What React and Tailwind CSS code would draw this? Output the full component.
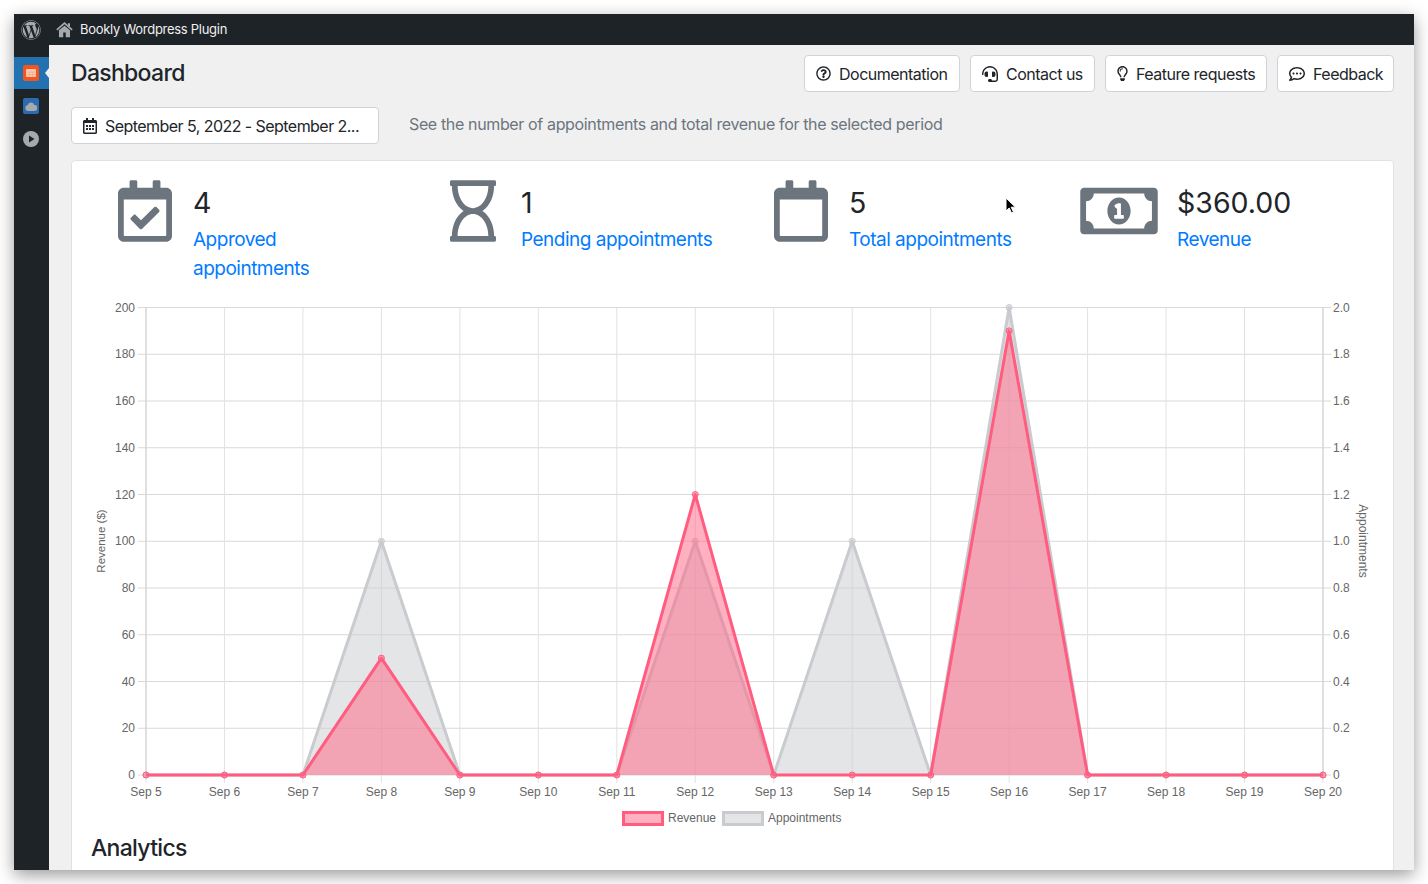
import React from 'react';
import { FaWordpress, FaRegCalendarCheck, FaRegCalendar, FaRegHourglass, FaRegMoneyBillAlt, FaRegQuestionCircle, FaHeadset, FaRegLightbulb, FaRegCommentDots, FaRegCalendarAlt } from 'react-icons/fa';

const days = ['Sep 5', 'Sep 6', 'Sep 7', 'Sep 8', 'Sep 9', 'Sep 10', 'Sep 11', 'Sep 12', 'Sep 13', 'Sep 14', 'Sep 15', 'Sep 16', 'Sep 17', 'Sep 18', 'Sep 19', 'Sep 20'];
const revenue = [0, 0, 0, 50, 0, 0, 0, 120, 0, 0, 0, 190, 0, 0, 0, 0];
const appointments = [0, 0, 0, 100, 0, 0, 0, 100, 0, 100, 0, 200, 0, 0, 0, 0];

const LEFT = 146;
const RIGHT = 1323;
const TOP = 307.5;
const BOTTOM = 775;
const xAt = (i) => LEFT + (i * (RIGHT - LEFT)) / 15;
const yAt = (v) => BOTTOM - (v * (BOTTOM - TOP)) / 200;

function Series({ data, stroke, fill }) {
  const line = data.map((v, i) => `${xAt(i)},${yAt(v)}`).join(' ');
  const area = `${LEFT},${BOTTOM} ${line} ${RIGHT},${BOTTOM}`;
  return (
    <g>
      <polygon points={area} fill={fill} />
      <polyline points={line} fill="none" stroke={stroke} strokeWidth="3" strokeLinejoin="round" />
      {data.map((v, i) => (
        <circle key={i} cx={xAt(i)} cy={yAt(v)} r="3" fill={fill} stroke={stroke} strokeWidth="1" />
      ))}
    </g>
  );
}

function Chart() {
  const ticks = [0, 20, 40, 60, 80, 100, 120, 140, 160, 180, 200];
  return (
    <svg width="1321" height="540" viewBox="72 290 1321 540" className="block" fontFamily="'Liberation Sans', sans-serif" fontSize="12" fill="#666">
      {ticks.map((t) => (
        <g key={t}>
          <line x1={LEFT - 8} x2={RIGHT + 8} y1={yAt(t)} y2={yAt(t)} stroke="#d9d9d9" />
          <text x={LEFT - 11} y={yAt(t) + 4} textAnchor="end">{t}</text>
          <text x={RIGHT + 10} y={yAt(t) + 4}>{t === 0 ? '0' : (t / 100).toFixed(1)}</text>
        </g>
      ))}
      {days.map((d, i) => (
        <g key={d}>
          <line x1={xAt(i)} x2={xAt(i)} y1={TOP} y2={BOTTOM + 8} stroke="#e2e2e2" />
          <text x={xAt(i)} y={796} textAnchor="middle">{d}</text>
        </g>
      ))}
      <line x1={LEFT} x2={LEFT} y1={TOP} y2={BOTTOM} stroke="#cfcfcf" />
      <line x1={RIGHT} x2={RIGHT} y1={TOP} y2={BOTTOM} stroke="#cfcfcf" />
      <text transform="translate(105 541) rotate(-90)" textAnchor="middle" fontSize="11.500">Revenue ($)</text>
      <text transform="translate(1359 541) rotate(90)" textAnchor="middle">Appointments</text>
      <Series data={appointments} stroke="#c9cbcf" fill="rgba(201,203,207,0.5)" />
      <Series data={revenue} stroke="#ff5c80" fill="rgba(255,99,132,0.5)" />
      <rect x="623.5" y="812.5" width="39" height="12" fill="#ffb1c1" stroke="#ff5c80" strokeWidth="3" />
      <text x="668" y="822">Revenue</text>
      <rect x="723.5" y="812.5" width="39" height="12" fill="#e4e5e7" stroke="#c9cbcf" strokeWidth="3" />
      <text x="768" y="822">Appointments</text>
    </svg>
  );
}

function HeadButton({ icon, label, width }) {
  return (
    <button className={`${width} h-[37px] flex items-center gap-2 pl-[11px] bg-white border border-[#ced4da] rounded text-[16px] tracking-[-0.5px] whitespace-nowrap text-[#212529]`}>
      {icon}
      {label}
    </button>
  );
}

function Stat({ icon, pad, value, label }) {
  return (
    <div className="flex">
      <div className={`w-[121px] shrink-0 -mt-[3px] flex justify-end items-start ${pad}`}>{icon}</div>
      <div>
        <div className="text-[28.500px] leading-[40px] text-[#212529]">{value}</div>
        <div className="text-[19px] leading-[29px] tracking-[-0.5px] text-[#007bff] mt-[2px] w-[195px]">{label}</div>
      </div>
    </div>
  );
}

export default function App() {
  return (
    <div className="w-[1428px] h-[884px] p-[14px] bg-white overflow-hidden [font-family:Inter,sans-serif]">
      <div className="relative w-[1400px] h-[856px] flex flex-col overflow-hidden shadow-[0_5px_16px_rgba(0,0,0,0.4)]">
        <header className="h-[31px] shrink-0 bg-[#1d2327] flex items-center text-[#f0f0f1] text-[13px] tracking-[-0.28px]">
          <div className="w-[33px] flex justify-center text-[#a7aaad]">
            <FaWordpress size={20} />
          </div>
          <svg width="17" height="17" viewBox="0 0 20 20" className="ml-[9px] mr-[6px]">
            <path d="M1 10.500 10 2.500l9 8" fill="none" stroke="#a7aaad" strokeWidth="2" />
            <path d="M14 2.500h2.500v4.500L14 5z" fill="#a7aaad" />
            <path d="M10 5.500 3.500 11v8h5v-5.500h3V19h5v-8z" fill="#a7aaad" />
          </svg>
          <span className="ml-px">Bookly Wordpress Plugin</span>
        </header>
        <div className="flex-1 flex min-h-0">
          <aside className="w-[35px] shrink-0 bg-[#1d2327] pt-[12px]">
            <div className="relative h-[32px] pr-[2px] bg-[#2271b1] flex items-center justify-center">
              <svg width="16" height="16" viewBox="0 0 16 16">
                <rect width="16" height="16" rx="2" fill="#f0561d" />
                <rect x="3" y="4" width="10" height="8" rx="1" fill="#ffc9b0" />
                <path d="M3 7h10M3 9.500h10M6.300 7v5M9.700 7v5" stroke="#f79a78" strokeWidth="0.500" />
              </svg>
              <div className="absolute right-0 top-[11px] w-0 h-0 border-y-[5px] border-y-transparent border-r-[4px] border-r-[#f0f0f1]" />
            </div>
            <div className="h-[34px] pr-[2px] flex items-center justify-center">
              <div className="w-[16px] h-[16px] rounded-[2px] bg-[#2b6cb0] flex items-center justify-center">
                <svg width="12" height="9" viewBox="0 0 12 9" fill="#a7aaad">
                  <path d="M3 9a3 3 0 0 1-.4-5.900A3.500 3.500 0 0 1 9.300 3 3 3 0 0 1 9.500 9z" />
                </svg>
              </div>
            </div>
            <div className="h-[32px] pr-[2px] flex items-center justify-center">
              <svg width="16" height="16" viewBox="0 0 16 16">
                <circle cx="8" cy="8" r="8" fill="#a7aaad" />
                <path d="M6 4.500 11.500 8 6 11.500z" fill="#1d2327" />
              </svg>
            </div>
          </aside>
          <main className="flex-1 min-w-0 bg-[#f0f0f1] pl-[22px] pr-[20px] pt-[10px] overflow-hidden">
            <div className="flex items-center justify-between">
              <h1 className="text-[23px] tracking-[-0.7px] font-medium text-[#212529]">Dashboard</h1>
              <div className="flex gap-[10px]">
                <HeadButton width="w-[156px]" label="Documentation" icon={<FaRegQuestionCircle size={15} />} />
                <HeadButton width="w-[125px]" label="Contact us" icon={<FaHeadset size={16} />} />
                <HeadButton width="w-[162px]" label="Feature requests" icon={<FaRegLightbulb className="w-[11px] h-[15px]" />} />
                <HeadButton width="w-[117px]" label="Feedback" icon={<FaRegCommentDots size={16} />} />
              </div>
            </div>
            <div className="flex items-center mt-[15px]">
              <div className="w-[308px] h-[37px] flex items-center gap-[8px] pl-[11px] bg-white border border-[#ced4da] rounded text-[16px] tracking-[-0.55px] text-[#212529]">
                <FaRegCalendarAlt className="w-[14px] h-[16px]" />
                <span>September 5, 2022 - September 2...</span>
              </div>
              <p className="ml-[30px] text-[16px] tracking-[-0.36px] text-[#6c757d] -mt-1">See the number of appointments and total revenue for the selected period</p>
            </div>
            <section className="mt-[16px] bg-white border border-[#dee2e6] rounded-t h-[800px]">
              <div className="grid grid-cols-4 w-[1312px] h-[129px] pt-[22px]">
                <Stat icon={<FaRegCalendarCheck className="w-[54px] h-[62px]" color="#6c757d" />} pad="pr-[21px]" value="4" label="Approved appointments" />
                <Stat icon={<FaRegHourglass className="w-[46px] h-[62px]" color="#6c757d" />} pad="pr-[25px]" value="1" label="Pending appointments" />
                <Stat icon={<FaRegCalendar className="w-[54px] h-[62px]" color="#6c757d" />} pad="pr-[21px]" value="5" label="Total appointments" />
                <Stat icon={<FaRegMoneyBillAlt className="w-[78px] h-[62px]" color="#6c757d" />} pad="pr-[19px]" value="$360.00" label="Revenue" />
              </div>
              <Chart />
              <h2 className="pl-[19px] mt-px text-[23px] tracking-[-0.7px] font-medium text-[#212529]">Analytics</h2>
            </section>
          </main>
        </div>
        <svg width="12" height="18" viewBox="0 0 12 18" className="absolute left-[991px] top-[183px]">
          <path d="M1 1v13l3.200-3 2.300 5 2-1-2.300-4.800H10.500z" fill="#000" stroke="#fff" strokeWidth="1" />
        </svg>
      </div>
    </div>
  );
}
